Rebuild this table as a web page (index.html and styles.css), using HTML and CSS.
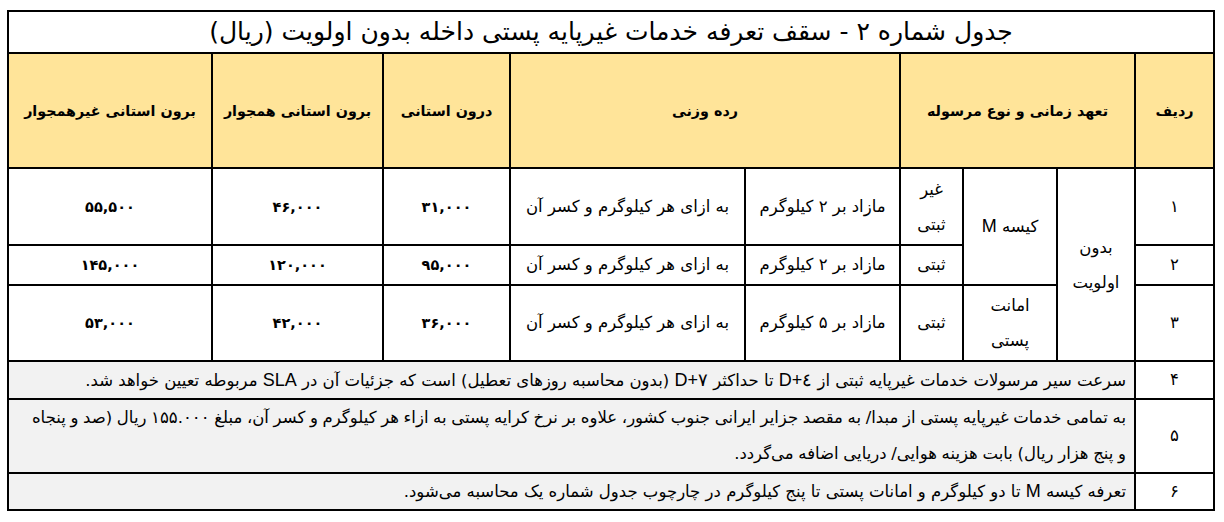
FILE: index.html
```html
<!DOCTYPE html>
<html lang="fa" dir="rtl">
<head>
<meta charset="utf-8">
<title>جدول شماره ۲</title>
<link rel="stylesheet" href="styles.css">
</head>
<body>
<div class="page">
<table class="tariff">
  <colgroup>
    <col class="c-num">
    <col class="c-prio">
    <col class="c-type">
    <col class="c-reg">
    <col class="c-extra">
    <col class="c-per">
    <col class="c-in">
    <col class="c-near">
    <col class="c-far">
  </colgroup>
  <tr class="r-title">
    <td colspan="9" class="title">جدول شماره ۲ - سقف تعرفه خدمات غیرپایه پستی داخله بدون اولویت (ریال)</td>
  </tr>
  <tr class="r-head">
    <th>ردیف</th>
    <th colspan="3">تعهد زمانی و نوع مرسوله</th>
    <th colspan="2">رده وزنی</th>
    <th>درون استانی</th>
    <th>برون استانی همجوار</th>
    <th>برون استانی غیرهمجوار</th>
  </tr>
  <tr class="r-1">
    <td class="num">۱</td>
    <td rowspan="3" class="stack">بدون<br>اولویت</td>
    <td rowspan="2">کیسه <span class="latin">M</span></td>
    <td class="stack">غیر<br>ثبتی</td>
    <td>مازاد بر ۲ کیلوگرم</td>
    <td>به ازای هر کیلوگرم و کسر آن</td>
    <td class="price">۳۱,۰۰۰</td>
    <td class="price">۴۶,۰۰۰</td>
    <td class="price">۵۵,۵۰۰</td>
  </tr>
  <tr class="r-2">
    <td class="num">۲</td>
    <td>ثبتی</td>
    <td>مازاد بر ۲ کیلوگرم</td>
    <td>به ازای هر کیلوگرم و کسر آن</td>
    <td class="price">۹۵,۰۰۰</td>
    <td class="price">۱۲۰,۰۰۰</td>
    <td class="price">۱۴۵,۰۰۰</td>
  </tr>
  <tr class="r-3">
    <td class="num">۳</td>
    <td class="stack">امانت<br>پستی</td>
    <td>ثبتی</td>
    <td>مازاد بر ۵ کیلوگرم</td>
    <td>به ازای هر کیلوگرم و کسر آن</td>
    <td class="price">۳۶,۰۰۰</td>
    <td class="price">۴۲,۰۰۰</td>
    <td class="price">۵۳,۰۰۰</td>
  </tr>
  <tr class="r-4">
    <td class="num">۴</td>
    <td colspan="8" class="note">سرعت سیر مرسولات خدمات غیرپایه ثبتی از <span class="latin ltr">D+٤</span> تا حداکثر <span class="latin ltr">D+۷</span> (بدون محاسبه روزهای تعطیل) است که جزئیات آن در <span class="latin">SLA</span> مربوطه تعیین خواهد شد.</td>
  </tr>
  <tr class="r-5">
    <td class="num">۵</td>
    <td colspan="8" class="note wrap">به تمامی خدمات غیرپایه پستی از مبدا/ به مقصد جزایر ایرانی جنوب کشور، علاوه بر نرخ کرایه پستی به ازاء هر کیلوگرم و کسر آن، مبلغ ۱۵۵.۰۰۰ ریال (صد و پنجاه<br>و پنج هزار ریال) بابت هزینه هوایی/ دریایی اضافه می‌گردد.</td>
  </tr>
  <tr class="r-6">
    <td class="num">۶</td>
    <td colspan="8" class="note">تعرفه کیسه <span class="latin">M</span> تا دو کیلوگرم و امانات پستی تا پنج کیلوگرم در چارچوب جدول شماره یک محاسبه می‌شود.</td>
  </tr>
</table>
</div>
</body>
</html>
```

FILE: styles.css
```css
html, body {
  margin: 0;
  padding: 0;
  background: #ffffff;
}

.page {
  padding: 10px 9px 0 8px;
}

.tariff {
  direction: rtl;
  width: 1206px;
  border-collapse: collapse;
  table-layout: fixed;
  font-family: "DejaVu Sans", sans-serif;
  font-size: 16.5px;
  color: #000;
}

.c-num { width: 79px; }
.c-prio { width: 78px; }
.c-type { width: 94px; }
.c-reg { width: 63px; }
.c-extra { width: 155px; }
.c-per { width: 235px; }
.c-in { width: 127px; }
.c-near { width: 171px; }
.c-far { width: 204px; }

.tariff td,
.tariff th {
  border: 2px solid #000;
  text-align: center;
  vertical-align: middle;
  padding: 0 4px;
  line-height: 28px;
  white-space: nowrap;
}

.r-title { height: 42px; }
.r-head { height: 115px; }
.r-1 { height: 77px; }
.r-2 { height: 40px; }
.r-3 { height: 76px; }
.r-4 { height: 38px; }
.r-5 { height: 73px; }
.r-6 { height: 37px; }

.tariff .title {
  font-size: 25px;
  font-weight: normal;
  line-height: 34px;
}

.r-head th {
  background: #ffe499;
  font-weight: bold;
  font-size: 14.3px;
}

.price {
  font-weight: bold;
  font-size: 14.5px;
}

.tariff .stack {
  line-height: 35px;
  padding: 0 2px;
}

.latin {
  font-family: "Liberation Sans", Arial, sans-serif;
  font-size: 18px;
}

.ltr {
  direction: ltr;
  unicode-bidi: isolate;
}

.tariff .note {
  background: #f2f2f2;
  text-align: right;
  padding: 0 8px;
}

.tariff .wrap {
  line-height: 36px;
  word-spacing: -0.6px;
}
```
